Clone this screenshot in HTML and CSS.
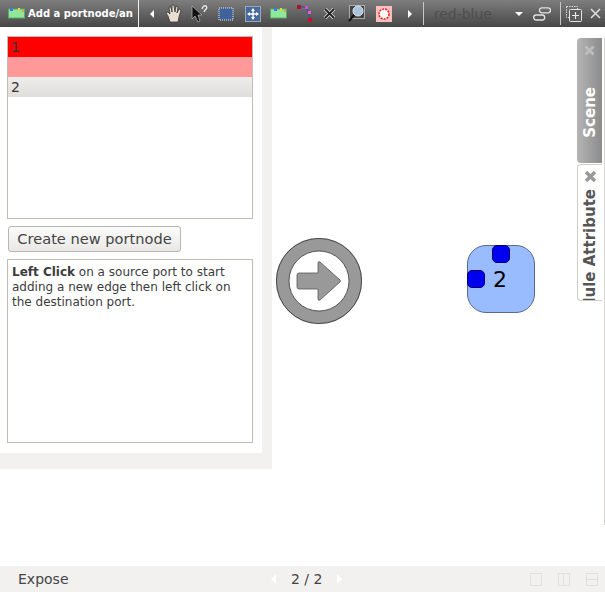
FILE: index.html
```html
<!DOCTYPE html>
<html lang="en">
<head>
    <meta charset="UTF-8">
    <title>Expose</title>
    <link rel="stylesheet" href="styles.css">
</head>
<body>
    <div class="toolbar">
        <div class="tool tool-mode">
            <svg width="17" height="11" viewBox="0 0 17 11"><rect x="0.5" y="1" width="16" height="9" fill="#8fe89a" stroke="#5aa86a"/><rect x="2" y="0" width="3" height="3" fill="#3a7be0"/><rect x="10" y="0" width="2" height="3" fill="#e8d040"/><rect x="14" y="2" width="2" height="2" fill="#e8a040"/></svg>
            <span class="mode-label">Add a portnode/an</span>
        </div>
        <div class="sep sep-first"></div>
        <div class="tool arrow-slot arrow-slot-left"><span class="arrow-left"></span></div>
        <div class="tool tool-hand">
            <svg width="18" height="19" viewBox="0 0 18 19"><path d="M5 18 L3 12 L1 9 L3 8 L5 10 L4 3 L6 3 L7 8 L7 1 L9 1 L10 8 L11 2 L13 3 L12 9 L14 5 L16 6 L14 13 L13 18 Z" fill="#e8dfd0" stroke="#3a3a3a" stroke-width="0.8"/></svg>
        </div>
        <div class="tool">
            <svg width="20" height="19" viewBox="0 0 20 19"><path d="M2 2 L2 15 L5 12 L8 18 L10 17 L8 11 L12 11 Z" fill="#111" stroke="#aaa" stroke-width="0.8"/><path d="M12 5 Q13 1 16 2 Q18 4 15 6 L14 8" fill="none" stroke="#e6e6e6" stroke-width="1.4"/></svg>
        </div>
        <div class="tool">
            <svg width="16" height="14" viewBox="0 0 16 14"><rect x="1" y="1" width="14" height="12" fill="#3f6399" stroke="#eee" stroke-dasharray="1 1"/></svg>
        </div>
        <div class="tool">
            <svg width="16" height="16" viewBox="0 0 16 16"><rect x="0.5" y="0.5" width="15" height="15" fill="#47699c" stroke="#9aa8bc"/><path d="M8 3 V13 M3 8 H13" stroke="#fff" stroke-width="1.4"/><path d="M8 2 L6 5 H10 Z M8 14 L6 11 H10 Z M2 8 L5 6 V10 Z M14 8 L11 6 V10 Z" fill="#fff"/></svg>
        </div>
        <div class="tool">
            <svg width="17" height="11" viewBox="0 0 17 11"><rect x="0.5" y="1" width="16" height="9" fill="#8fe89a" stroke="#5aa86a"/><rect x="4" y="0" width="3" height="3" fill="#3a7be0"/><rect x="10" y="0" width="2" height="3" fill="#e8d040"/><rect x="14" y="2" width="2" height="2" fill="#e8a040"/></svg>
        </div>
        <div class="tool">
            <svg width="18" height="19" viewBox="0 0 18 19"><path d="M3 3 Q10 2 12 7 L14 15" fill="none" stroke="#3d4f9c" stroke-width="1.2"/><rect x="1" y="1" width="4" height="4" fill="#b0102a"/><rect x="9" y="2" width="3" height="3" fill="#d050d0"/><rect x="12" y="7" width="3" height="3" fill="#e060e0"/><rect x="12" y="14" width="4" height="4" fill="#c8102a"/></svg>
        </div>
        <div class="tool tool-cross">
            <svg width="13" height="13" viewBox="0 0 13 13"><path d="M2 2 L11 11 M11 2 L2 11" stroke="#d8d8d8" stroke-width="3.6"/><path d="M2 2 L11 11 M11 2 L2 11" stroke="#222" stroke-width="1.8"/></svg>
        </div>
        <div class="tool">
            <svg width="18" height="18" viewBox="0 0 18 18"><rect x="1.5" y="0.5" width="15" height="13" fill="#444" stroke="#fff" stroke-dasharray="1 1"/><circle cx="10" cy="6" r="5" fill="#a9c4dd" stroke="#dfe8f0"/><path d="M6 10 L1 16" stroke="#111" stroke-width="2"/></svg>
        </div>
        <div class="tool">
            <svg width="16" height="16" viewBox="0 0 16 16"><rect width="16" height="16" fill="#f6c0c0"/><circle cx="8" cy="8" r="5" fill="#fff" stroke="#f02020" stroke-width="1.6" stroke-dasharray="2 1"/></svg>
        </div>
        <div class="tool arrow-slot"><span class="arrow-right"></span></div>
        <div class="sep"></div>
        <span class="scheme">red-blue</span>
        <span class="arrow-down"></span>
        <div class="tool tool-link">
            <svg width="18" height="14" viewBox="0 0 18 14"><rect x="6.5" y="0.8" width="11" height="5" rx="2.5" fill="none" stroke="#e4e4e4" stroke-width="1.3"/><rect x="0.7" y="8" width="11" height="5" rx="2.5" fill="none" stroke="#e4e4e4" stroke-width="1.3"/></svg>
        </div>
        <div class="sep"></div>
        <div class="tool tool-fit">
            <svg width="16" height="16" viewBox="0 0 16 16"><rect x="0.5" y="0.5" width="11" height="11" fill="none" stroke="#ddd" stroke-dasharray="1.5 1"/><rect x="3.5" y="3.5" width="12" height="12" rx="1" fill="#5c5c5c" stroke="#e4e4e4"/><path d="M9.5 6 V13 M6 9.5 H13" stroke="#e8e8e8" stroke-width="1.2"/></svg>
        </div>
        <div class="tool tool-close">
            <svg width="11" height="11" viewBox="0 0 11 11"><path d="M1 1 L10 10 M10 1 L1 10" stroke="#dcdcdc" stroke-width="1.6"/></svg>
        </div>
    </div>

    <div class="main">
        <div class="sidebar">
            <div class="panel">
                <div class="port-list">
                    <div class="row row-red">1</div>
                    <div class="row row-pink"></div>
                    <div class="row row-grey">2</div>
                </div>
                <button class="create-btn">Create new portnode</button>
                <div class="help"><b>Left Click</b> on a source port to start adding a new edge then left click on the destination port.</div>
            </div>
        </div>

        <div class="canvas">
            <svg class="next-arrow" width="86" height="86" viewBox="0 0 86 86">
                <circle cx="43" cy="43" r="36.5" fill="#fff" stroke="#999" stroke-width="13"/>
                <circle cx="43" cy="43" r="42.6" fill="none" stroke="#222" stroke-width="0.7"/>
                <circle cx="43" cy="43" r="30" fill="none" stroke="#222" stroke-width="0.7"/>
                <path d="M21 37 Q21 35 23 35 H42 V25 Q42 23 44 24 L64 42 Q65 43 64 44 L44 62 Q42 63 42 61 V51 H23 Q21 51 21 49 Z" fill="#999" stroke="#555" stroke-width="0.8"/>
            </svg>
            <div class="node">
                <span class="port port-top"></span>
                <span class="port port-left"></span>
                <span class="node-label">2</span>
            </div>
        </div>

        <div class="dock">
            <div class="tab tab-scene">
                <svg class="tab-x" width="11" height="11" viewBox="0 0 11 11"><path d="M1.5 1.5 L9.5 9.5 M9.5 1.5 L1.5 9.5" stroke="#bdbdbd" stroke-width="3"/></svg>
                <span class="tab-label">Scene</span>
            </div>
            <div class="tab tab-rule">
                <svg class="tab-x" width="13" height="13" viewBox="0 0 13 13"><path d="M2 2 L11 11 M11 2 L2 11" stroke="#999" stroke-width="3.4"/></svg>
                <span class="tab-label">Module Attribute</span>
            </div>
        </div>
    </div>

    <div class="footer">
        <span class="expose">Expose</span>
        <div class="pager">
            <span class="pager-left"></span>
            <span class="pager-text">2 / 2</span>
            <span class="pager-right"></span>
        </div>
        <div class="views">
            <span class="view"></span>
            <span class="view view-cols"></span>
            <span class="view view-rows"></span>
        </div>
    </div>
</body>
</html>
```

FILE: styles.css
```css
* {
    box-sizing: border-box;
}
body {
    margin: 0;
    width: 605px;
    height: 592px;
    overflow: hidden;
    display: flex;
    flex-direction: column;
    background-color: white;
    font-family: "DejaVu Sans", sans-serif;
    color: #3c3c3c;
}

.toolbar {
    height: 27px;
    flex: none;
    display: flex;
    align-items: center;
    background: linear-gradient(#7e7e7e, #474747);
}
.tool {
    width: 26.2px;
    height: 27px;
    flex: none;
    display: flex;
    align-items: center;
    justify-content: center;
}
.tool-mode {
    width: 138px;
    justify-content: flex-start;
    padding-left: 8px;
}
.mode-label {
    margin-left: 3px;
    font-size: 10px;
    font-weight: bold;
    color: white;
    white-space: nowrap;
}
.sep {
    width: 1px;
    height: 23px;
    flex: none;
    background-color: #c8c8c8;
}
.sep-first {
    height: 27px;
    background-color: #eee;
}
.arrow-slot {
    width: 26px;
}
.arrow-slot-left {
    width: 22px;
    padding-left: 4px;
}
.tool-cross {
    padding-right: 4px;
}
.arrow-left, .arrow-right, .arrow-down, .pager-left, .pager-right {
    width: 0;
    height: 0;
    display: block;
    border-style: solid;
    border-color: transparent;
}
.arrow-left {
    border-width: 4px 4px 4px 0;
    border-right-color: white;
}
.arrow-right {
    border-width: 4px 0 4px 4px;
    border-left-color: white;
}
.arrow-down {
    margin-left: 19px;
    border-width: 4px 4px 0 4px;
    border-top-color: white;
}
.scheme {
    margin-left: 10px;
    width: 62px;
    font-size: 14px;
    color: #4f4f4f;
    white-space: nowrap;
}
.tool-link {
    width: 35px;
    margin-left: 2px;
}
.tool-fit {
    width: 26px;
}
.tool-close {
    width: 18px;
}

.main {
    flex: 1;
    display: flex;
    min-height: 0;
}
.sidebar {
    width: 272px;
    height: 442px;
    flex: none;
    padding: 0 10px 16px 0;
    background-color: #f2f1f0;
}
.panel {
    height: 100%;
    padding: 9px 9px 0 7px;
    background-color: white;
}
.port-list {
    height: 183px;
    border: 1px solid #bfbdb8;
    font-size: 14px;
}
.row {
    height: 20px;
    padding-left: 3px;
    line-height: 20px;
    color: #333;
}
.row-red {
    background-color: #ff0000;
}
.row-pink {
    background-color: #ff9999;
}
.row-grey {
    background: linear-gradient(#eeedeb, #dfdedb);
}
.create-btn {
    display: block;
    width: 173px;
    height: 26px;
    margin: 7px 0 7px 1px;
    padding: 0 0 2px;
    border: 1px solid #b8b6b1;
    border-radius: 3px;
    background: linear-gradient(#fbfbfa, #e9e8e6);
    font-family: inherit;
    font-size: 14.6px;
    color: #444;
}
.help {
    height: 184px;
    padding: 5px 4px;
    border: 1px solid #bfbdb8;
    font-size: 12px;
    line-height: 15px;
    color: #3c3c3c;
}

.canvas {
    flex: 1;
    position: relative;
}
.next-arrow {
    position: absolute;
    left: 4px;
    top: 211px;
}
.node {
    position: absolute;
    left: 195px;
    top: 218px;
    width: 68px;
    height: 68px;
    display: flex;
    align-items: center;
    justify-content: center;
    border: 1px solid #5a6a88;
    border-radius: 19px;
    background-color: #99bbff;
}
.node-label {
    margin-right: 2px;
    font-size: 22px;
    color: black;
}
.port {
    position: absolute;
    width: 18px;
    height: 18px;
    border: 1px solid #00006a;
    border-radius: 5px;
    background-color: #0000f0;
}
.port-top {
    left: 24px;
    top: -1px;
}
.port-left {
    left: -1px;
    top: 24px;
}

.dock {
    width: 28px;
    height: 487px;
    flex: none;
    margin-top: 11px;
    border-right: 1px solid #d8d6d2;
    padding-right: 2px;
}
.tab {
    width: 25px;
    display: flex;
    flex-direction: column;
    align-items: center;
    overflow: hidden;
    font-size: 15px;
    font-weight: bold;
}
.tab-scene {
    height: 125px;
    padding-top: 7px;
    border-radius: 4px 0 0 4px;
    background: linear-gradient(90deg, #b5b5b5, #8c8c8c);
    color: white;
}
.tab-rule {
    height: 137px;
    margin-top: 1px;
    padding-top: 5px;
    border: 1px solid #d0cec9;
    border-right: none;
    border-radius: 4px 0 0 4px;
    background-color: white;
    color: #555;
}
.tab-x {
    flex: none;
}
.tab-label {
    flex: none;
    margin-top: 31px;
    writing-mode: vertical-rl;
    transform: rotate(180deg);
    white-space: nowrap;
}
.tab-rule .tab-label {
    margin-top: 6px;
}

.footer {
    height: 26px;
    flex: none;
    display: flex;
    align-items: center;
    background-color: #f2f1f0;
    font-size: 14px;
    color: #444;
}
.expose {
    width: 271px;
    padding-left: 18px;
}
.pager {
    display: flex;
    align-items: center;
}
.pager-left {
    border-width: 5px 5px 5px 0;
    border-right-color: white;
}
.pager-right {
    border-width: 5px 0 5px 5px;
    border-left-color: white;
}
.pager-text {
    margin: 0 15px;
}
.views {
    margin-left: auto;
    display: flex;
    gap: 16px;
    padding-right: 7px;
}
.view {
    width: 12px;
    height: 13px;
    border: 1px solid #e2e1df;
}
.view-cols {
    background: linear-gradient(90deg, transparent 4px, #e2e1df 4px, #e2e1df 5px, transparent 5px);
}
.view-rows {
    background: linear-gradient(transparent 5px, #e2e1df 5px, #e2e1df 6px, transparent 6px);
}
```
